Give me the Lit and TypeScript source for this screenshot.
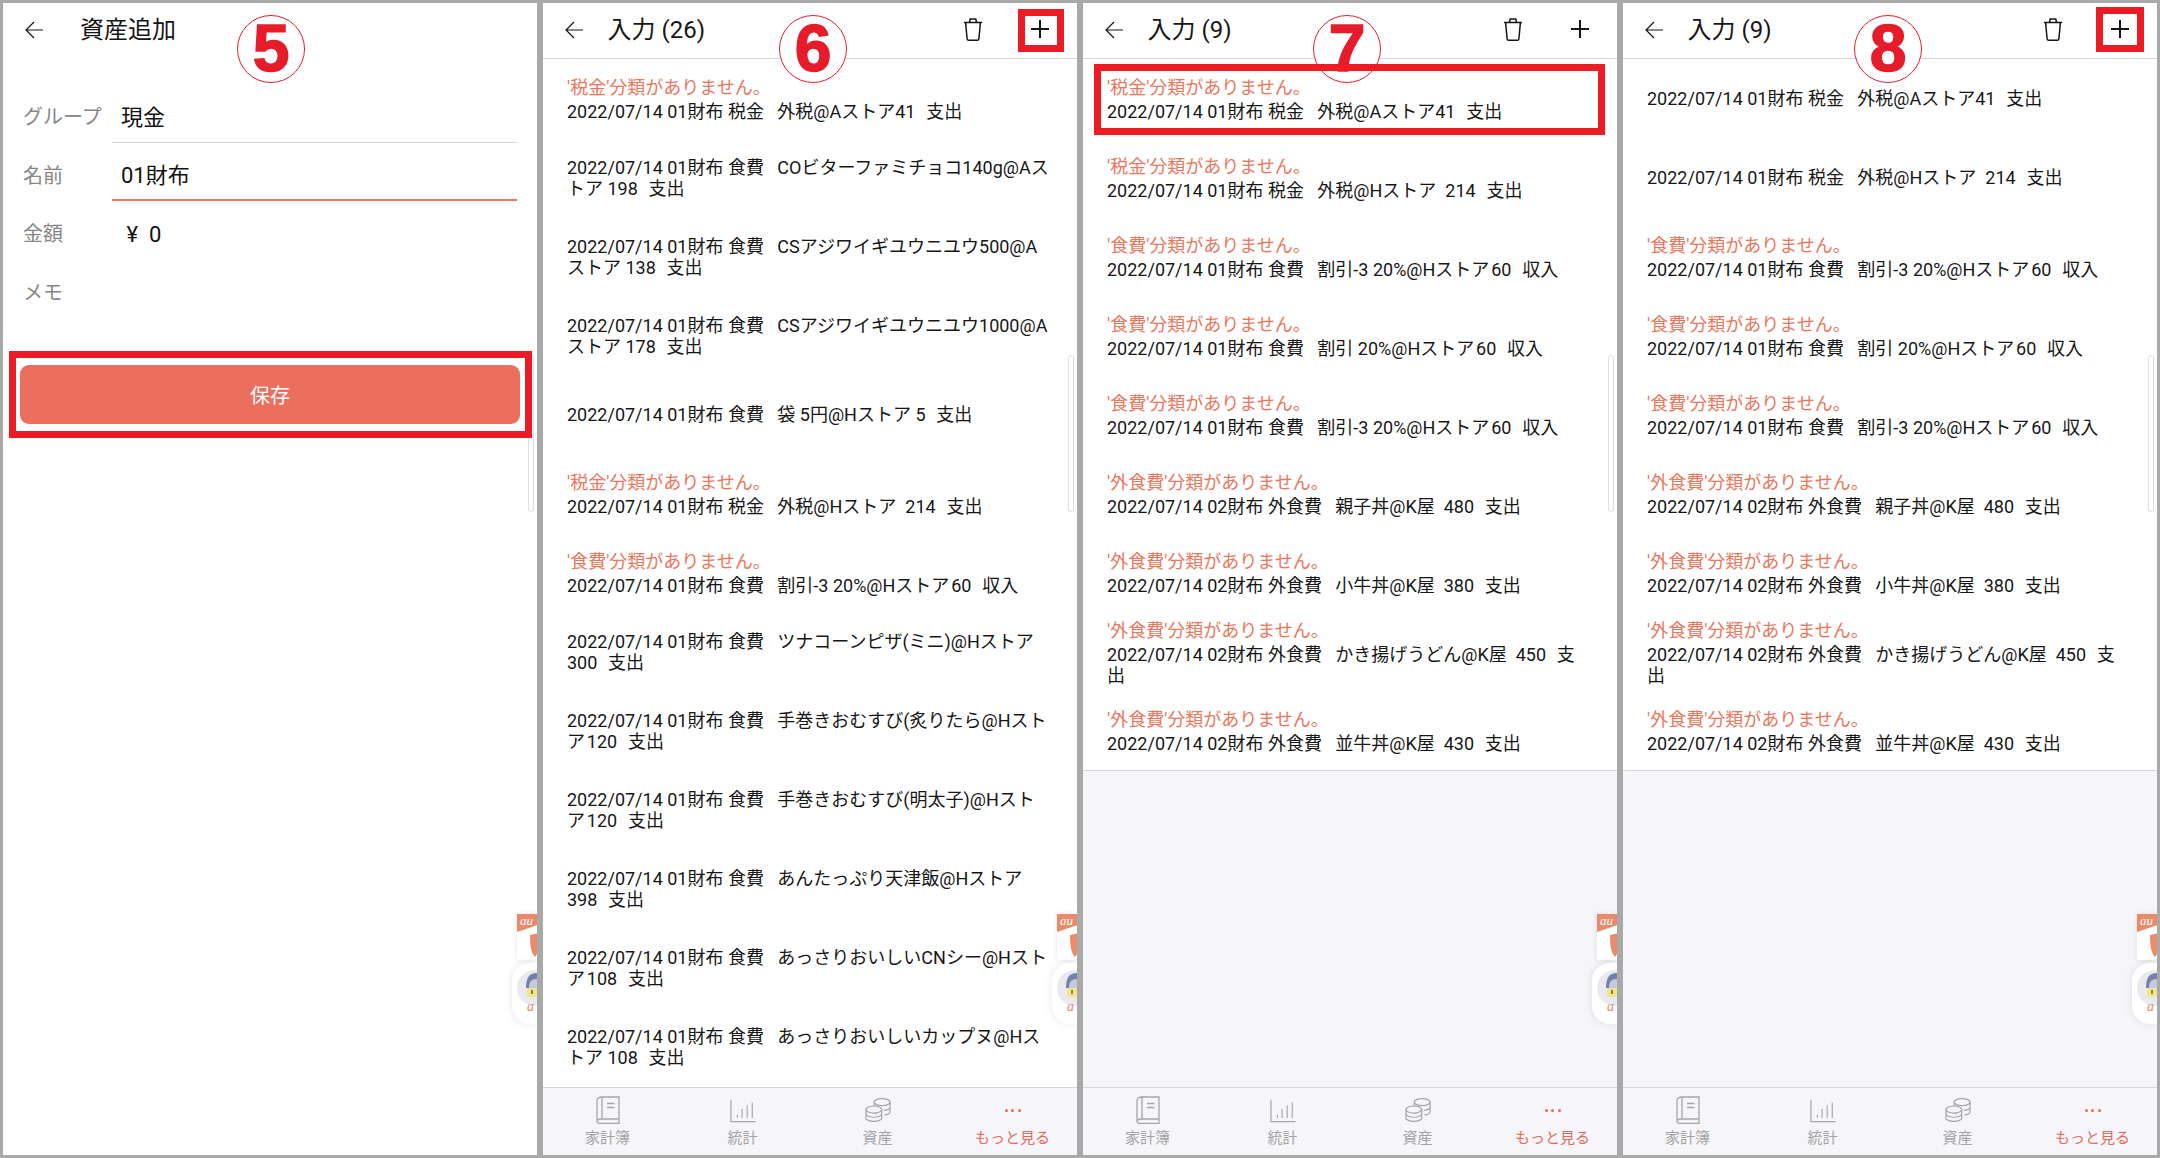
import { LitElement, html, css, svg } from "lit";
import { customElement } from "lit/decorators.js";

interface Row { warn?: string; text: string }

const W = (c: string) => `'${c}'分類がありません。`;
const HAIR = "\u200a";
const GAP = "  \u200a";

const longList: Row[] = [
  { warn: W("税金"), text: `2022/07/14 01財布 税金   外税@Aストア41${GAP}支出` },
  { text: `2022/07/14 01財布 食費   COビターファミチョコ140g@Aス\nトア 198${GAP}支出` },
  { text: `2022/07/14 01財布 食費   CSアジワイギユウニユウ500@A\nストア 138${GAP}支出` },
  { text: `2022/07/14 01財布 食費   CSアジワイギユウニユウ1000@A\nストア 178${GAP}支出` },
  { text: `2022/07/14 01財布 食費   袋 5円@Hストア 5${GAP}支出` },
  { warn: W("税金"), text: `2022/07/14 01財布 税金   外税@Hストア  214${GAP}支出` },
  { warn: W("食費"), text: `2022/07/14 01財布 食費   割引-3 20%@Hストア${HAIR}60${GAP}収入` },
  { text: `2022/07/14 01財布 食費   ツナコーンピザ(ミニ)@Hストア\n300${GAP}支出` },
  { text: `2022/07/14 01財布 食費   手巻きおむすび(炙りたら@Hスト\nア${HAIR}120${GAP}支出` },
  { text: `2022/07/14 01財布 食費   手巻きおむすび(明太子)@Hスト\nア${HAIR}120${GAP}支出` },
  { text: `2022/07/14 01財布 食費   あんたっぷり天津飯@Hストア\n398${GAP}支出` },
  { text: `2022/07/14 01財布 食費   あっさりおいしいCNシー@Hスト\nア${HAIR}108${GAP}支出` },
  { text: `2022/07/14 01財布 食費   あっさりおいしいカップヌ@Hス\nトア 108${GAP}支出` },
];

const shortTail: Row[] = [
  { warn: W("食費"), text: `2022/07/14 01財布 食費   割引-3 20%@Hストア${HAIR}60${GAP}収入` },
  { warn: W("食費"), text: `2022/07/14 01財布 食費   割引 20%@Hストア${HAIR}60${GAP}収入` },
  { warn: W("食費"), text: `2022/07/14 01財布 食費   割引-3 20%@Hストア${HAIR}60${GAP}収入` },
  { warn: W("外食費"), text: `2022/07/14 02財布 外食費   親子丼@K屋  480${GAP}支出` },
  { warn: W("外食費"), text: `2022/07/14 02財布 外食費   小牛丼@K屋  380${GAP}支出` },
  { warn: W("外食費"), text: `2022/07/14 02財布 外食費   かき揚げうどん@K屋  450${GAP}支\n出` },
  { warn: W("外食費"), text: `2022/07/14 02財布 外食費   並牛丼@K屋  430${GAP}支出` },
];

const shortList: Row[] = [
  { warn: W("税金"), text: `2022/07/14 01財布 税金   外税@Aストア41${GAP}支出` },
  { warn: W("税金"), text: `2022/07/14 01財布 税金   外税@Hストア  214${GAP}支出` },
  ...shortTail,
];

const resolvedList: Row[] = [
  { text: `2022/07/14 01財布 税金   外税@Aストア41${GAP}支出` },
  { text: `2022/07/14 01財布 税金   外税@Hストア  214${GAP}支出` },
  ...shortTail,
];

const icons = {
  back: svg`<svg class="ico back" viewBox="0 0 18 18"><path d="M9 1 1 9l8 8M1 9h17" fill="none" stroke="currentColor" stroke-width="1.2"/></svg>`,
  trash: svg`<svg class="ico trash" viewBox="0 0 20 23"><path d="M1 4.5h18M6.5 4.5 7.2 1h5.6l.7 3.5M2.6 4.5l1.5 16.2c.1 1 .7 1.6 1.6 1.6h8.6c.9 0 1.5-.6 1.6-1.6l1.5-16.2" fill="none" stroke="currentColor" stroke-width="1.5"/></svg>`,
  plus: svg`<svg class="ico plus" viewBox="0 0 18 18"><path d="M9 0v18M0 9h18" fill="none" stroke="currentColor" stroke-width="2"/></svg>`,
  book: svg`<svg class="tabico" viewBox="0 0 24 28"><path d="M6 1h17v22H5.500C3 23 1 24 1 25.500S3 27.500 5 27.500h18V23M1 25.500V5c0-2.400 2-4 5-4M6 1v22M11 7.500h7.500M11 11.500h7.500" fill="none" stroke="currentColor" stroke-width="1.300"/></svg>`,
  chart: svg`<svg class="tabico" viewBox="0 0 28 28"><path d="M1 3v23.500h26.500" fill="none" stroke="currentColor" stroke-width="1.300"/><path d="M8 19v3.500M13 13v9.500M18.500 9v13.500M24 6v16.500" fill="none" stroke="currentColor" stroke-width="1.200"/></svg>`,
  coins: svg`<svg class="tabico" viewBox="0 0 28 28"><g fill="none" stroke="currentColor" stroke-width="1.300"><ellipse cx="18.500" cy="5.500" rx="8.500" ry="3.800"/><path d="M10 5.500v10c0 1 1 2 2.500 2.700M27 5.500v10c0 2-3 3.500-6 3.800M27 10.500c0 2-3 3.500-6.500 3.800M10.500 9.500"/><ellipse cx="9.500" cy="13.500" rx="8.500" ry="3.800" fill="#f6f6fa"/><path d="M1 13.500v9c0 2.100 3.800 3.800 8.500 3.800s8.500-1.700 8.500-3.800v-9M1 18c0 2.100 3.800 3.800 8.500 3.800S18 20.100 18 18"/></g></svg>`,
};

const badge = html`
  <div class="floats">
    <div class="au-card">
      <div class="au-flag">au</div>
      <svg class="au-shield" viewBox="0 0 10 24"><path d="M1 2 10 0v18L6 24C2 20 1 12 1 2Z" fill="#e98a6b"/></svg>
    </div>
    <div class="lock-card">
      <div class="lock-disc"></div>
      <svg class="lock" viewBox="0 0 11 25"><path d="M0 15C0 5 3 0 11 0v15Z" fill="#7382ad"/><path d="M3 15c0-6 2-9 8-9v9Z" fill="#c4cbe0"/><rect x="1" y="15" width="10" height="9" rx="1" fill="#f4e58c"/><rect x="5" y="17" width="2" height="4" fill="#8a8050"/></svg>
      <span class="lock-au">a</span>
    </div>
  </div>
`;

@customElement("app-root")
export class AppRoot extends LitElement {
  static styles = css`
    :host {
      display: grid;
      grid-template-columns: repeat(4, 534px);
      column-gap: 6px;
      padding: 3px;
      width: 2160px;
      height: 1158px;
      box-sizing: border-box;
      background: #a9a9a9;
      font-family: Roboto, "Noto Sans CJK JP", sans-serif;
      color: #161616;
    }
    .panel {
      position: relative;
      background: #fff;
      display: flex;
      flex-direction: column;
      overflow: hidden;
      height: 1152px;
    }
    .head {
      flex: none;
      height: 55px;
      border-bottom: 1px solid #d6d6d6;
      display: flex;
      align-items: center;
      padding-left: 22px;
    }
    .head.plain { border-bottom: 0; }
    .ico { display: block; flex: none; }
    .back { width: 18px; height: 18px; margin-top: -2px; }
    .title {
      font-size: 24px;
      margin-left: 24.500px;
      line-height: 30px;
      margin-top: -2px;
      white-space: pre;
    }
    .plain .title { margin-left: 37px; }
    .spacer { flex: 1; }
    .trash { width: 20px; height: 23px; margin-top: -2px; }
    .plus { width: 18px; height: 18px; margin-top: -3px; margin-left: 48px; margin-right: 28px; }
    .list { flex: none; }
    .list.fill { flex: 1; overflow: hidden; }
    .list.bounded { border-bottom: 1px solid #d6d6d6; }
    .row {
      height: 79px;
      padding: 0 24px;
      display: flex;
      flex-direction: column;
      justify-content: center;
      white-space: pre;
    }
    .warn { font-size: 18px; line-height: 25px; margin-bottom: 1px; color: #e8775d; }
    .line { font-size: 18px; line-height: 21px; }
    .empty { flex: 1; background: #f6f6fa; }
    .nav {
      flex: none;
      height: 67px;
      margin: 0 -3px;
      background: #f6f6fa;
      border-top: 1px solid #d6d6d6;
      display: grid;
      grid-template-columns: repeat(4, 1fr);
    }
    .tab {
      display: flex;
      flex-direction: column;
      align-items: center;
      color: #a3a3a3;
      font-size: 15px;
      padding-top: 8px;
    }
    .tab.on { color: #e8695a; }
    .tabico { width: 26px; height: 28px; display: block; color: #a6a6a6; }
    .dots { width: 26px; height: 28px; display: flex; align-items: center; justify-content: center; gap: 3.500px; }
    .dots i { width: 3px; height: 3px; border-radius: 50%; background: #e8695a; display: block; }
    .tab span { line-height: 20px; margin-top: 4px; }

    .form { padding: 0 20px 0 0; margin-top: 26px; }
    .field { display: grid; grid-template-columns: 109px 1fr; grid-template-rows: 58.500px; height: 58.500px; }
    .lab { padding-left: 20px; font-size: 20px; color: #868686; line-height: 50px; margin-top: 8px; white-space: nowrap; }
    .val { font-size: 22px; line-height: 46px; padding: 10.500px 0 0 9px; border-bottom: 1px solid #d4d4d4; color: #111; white-space: pre; }
    .val.active { border-bottom: 2px solid #ec7767; }
    .val.none { border-bottom: 0; }
    .save {
      margin: 47px 17px 0;
      height: 59px;
      border-radius: 9px;
      background: #ec6e5e;
      color: #fff;
      font-size: 20px;
      display: flex;
      align-items: center;
      justify-content: center;
    }

    .num {
      position: absolute;
      top: 12px;
      width: 68px;
      height: 68px;
      margin-left: -34px;
      box-sizing: border-box;
      border: 1.500px solid #e61c2a;
      border-radius: 50%;
      background: #fff;
      color: #e61c2a;
      font-family: "Liberation Sans", sans-serif;
      font-weight: 700;
      font-size: 66px;
      line-height: 65px;
      text-align: center;
      -webkit-text-stroke: 1.500px #e61c2a;
    }
    .mark { position: absolute; border: 7px solid #ed1c24; box-sizing: border-box; }
    .scroll {
      position: absolute;
      box-sizing: border-box;
      left: 524.500px;
      width: 6.500px;
      top: 352px;
      height: 157px;
      background: #fff;
      border: 1px solid #dedede;
      border-radius: 3.500px;
    }
    .floats { position: absolute; right: 0; top: 911px; width: 25px; }
    .au-card { height: 46px; margin-left: 5px; position: relative; overflow: hidden; background: #fff; box-shadow: 0 0 6px #0000001a; }
    .au-flag {
      height: 18px;
      background: #e98a6b;
      color: #fff;
      font: italic 13px/14px "Liberation Serif", serif;
      padding-left: 3px;
      clip-path: polygon(0 0, 100% 0, 100% 62%, 0 100%);
    }
    .au-shield { position: absolute; left: 12px; top: 19px; width: 10px; height: 24px; }
    .lock-card { height: 61px; margin-top: 3px; position: relative; overflow: hidden; background: #fff; border-radius: 18px 0 0 18px; box-shadow: 0 0 8px #0000001a; }
    .lock-disc { position: absolute; left: 5px; top: 7px; width: 36px; height: 36px; border-radius: 50%; background: #e9e9ef; }
    .lock { position: absolute; left: 14px; top: 10px; width: 11px; height: 25px; }
    .lock-au { position: absolute; left: 15px; bottom: 10px; color: #e98a6b; font: italic 14px/14px "Liberation Serif", serif; }
  `;

  private renderRows(rows: Row[]) {
    return rows.map(
      (r) => html`<div class="row">
        ${r.warn ? html`<div class="warn">${r.warn}</div>` : ""}
        <div class="line">${r.text}</div>
      </div>`
    );
  }

  private header(title: string) {
    return html`<div class="head">
      ${icons.back}
      <div class="title">${title}</div>
      <div class="spacer"></div>
      ${icons.trash}${icons.plus}
    </div>`;
  }

  private nav() {
    return html`<div class="nav">
      <div class="tab">${icons.book}<span>家計簿</span></div>
      <div class="tab">${icons.chart}<span>統計</span></div>
      <div class="tab">${icons.coins}<span>資産</span></div>
      <div class="tab on"><div class="dots"><i></i><i></i><i></i></div><span>もっと見る</span></div>
    </div>`;
  }

  render() {
    return html`
      <section class="panel">
        <div class="head plain">${icons.back}<div class="title">資産追加</div></div>
        <div class="form">
          <div class="field"><div class="lab">グループ</div><div class="val">現金</div></div>
          <div class="field"><div class="lab">名前</div><div class="val active">01財布</div></div>
          <div class="field"><div class="lab">金額</div><div class="val none"> ¥  0</div></div>
          <div class="field"><div class="lab">メモ</div><div class="val none"></div></div>
        </div>
        <div class="save">保存</div>
        <div class="scroll"></div>
        ${badge}
        <div class="num" style="left:268px">5</div>
        <div class="mark" style="left:6px;top:348px;width:523px;height:87px"></div>
      </section>

      <section class="panel">
        ${this.header("入力 (26)")}
        <div class="list fill">${this.renderRows(longList)}</div>
        ${this.nav()}
        <div class="scroll"></div>
        ${badge}
        <div class="num" style="left:270px">6</div>
        <div class="mark" style="left:475px;top:6px;width:46px;height:43px"></div>
      </section>

      <section class="panel">
        ${this.header("入力 (9)")}
        <div class="list bounded">${this.renderRows(shortList)}</div>
        <div class="empty"></div>
        ${this.nav()}
        <div class="scroll"></div>
        ${badge}
        <div class="num" style="left:264px">7</div>
        <div class="mark" style="left:11px;top:61px;width:511px;height:71px"></div>
      </section>

      <section class="panel">
        ${this.header("入力 (9)")}
        <div class="list bounded">${this.renderRows(resolvedList)}</div>
        <div class="empty"></div>
        ${this.nav()}
        <div class="scroll"></div>
        ${badge}
        <div class="num" style="left:265px">8</div>
        <div class="mark" style="left:473px;top:4px;width:48px;height:45px"></div>
      </section>
    `;
  }
}
